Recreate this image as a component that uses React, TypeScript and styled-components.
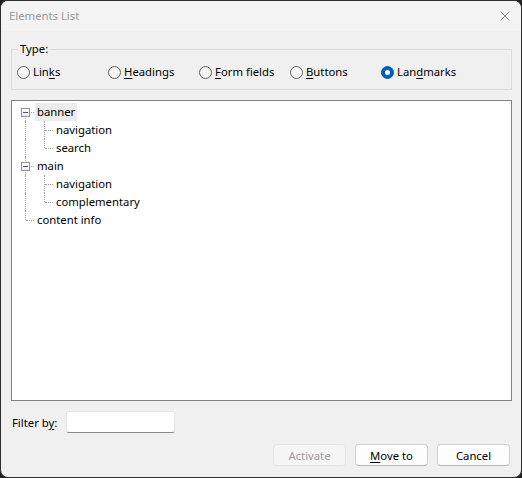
import React from "react";
import styled, { createGlobalStyle, css } from "styled-components";

const Global = createGlobalStyle`
  html, body { margin: 0; padding: 0; background: #202020; }
  body { width: 522px; height: 478px; overflow: hidden; }
  * { box-sizing: border-box; }
`;

const FONT = `"Noto Sans", "Open Sans", sans-serif`;
const SIZE = "11.3px";

const Window = styled.div`
  width: 522px;
  height: 478px;
  border: 1px solid #2e2e2e;
  border-radius: 8px;
  overflow: hidden;
  background: #f0f0f0;
  display: flex;
  flex-direction: column;
  font-family: ${FONT};
  font-size: ${SIZE};
  color: #000;
`;

const TitleBar = styled.div`
  height: 30px;
  flex: none;
  background: #f3f3f3;
  display: flex;
  align-items: center;
  justify-content: space-between;
  padding: 0 10px 0 8px;
`;

const Title = styled.span`
  color: #9a9a9a;
  line-height: 16px;
`;

const Close = styled.svg`
  width: 10px;
  height: 10px;
  margin-right: 1px;
`;

const Body = styled.div`
  flex: 1;
  display: flex;
  flex-direction: column;
  padding: 10px 9px 10px 10px;
`;

const Group = styled.fieldset`
  margin: 0;
  padding: 7px 5px 9px 5px;
  border: 1px solid #dcdcdc;
  min-width: 0;
`;

const Legend = styled.legend`
  padding: 0 2px;
  margin-left: 1px;
  line-height: 16px;
`;

const RadioRow = styled.div`
  display: grid;
  grid-template-columns: repeat(5, 91px);
  height: 16px;
  align-items: center;
`;

const RadioItem = styled.label`
  display: flex;
  align-items: center;
  gap: 3px;
  line-height: 16px;
  white-space: nowrap;
`;

const RadioCircle = styled.span<{ $checked?: boolean }>`
  width: 13px;
  height: 13px;
  border-radius: 50%;
  flex: none;
  display: flex;
  align-items: center;
  justify-content: center;
  ${(p) =>
    p.$checked
      ? css`
          background: #005fb8;
          border: 1px solid #005fb8;
          &::after {
            content: "";
            width: 5px;
            height: 5px;
            border-radius: 50%;
            background: #fff;
          }
        `
      : css`
          background: #f5f5f5;
          border: 1px solid #606060;
        `}
`;

const U = styled.span`
  text-decoration: underline;
  text-underline-offset: 2px;
`;

const TreeBox = styled.div`
  margin-top: 10px;
  height: 301px;
  flex: none;
  background: #fff;
  border: 1px solid #838383;
  padding: 2px 0 0 3px;
`;

const Row = styled.div`
  display: flex;
  height: 18px;
  align-items: stretch;
`;

type Kind = "first" | "tee" | "elbow" | "pipe";

const Cell = styled.div<{ $kind: Kind }>`
  width: 19px;
  flex: none;
  position: relative;
  &::before {
    content: "";
    position: absolute;
    left: 10px;
    border-left: 1px dotted #a0a0a0;
    top: ${(p) => (p.$kind === "first" ? "9px" : "0")};
    bottom: ${(p) => (p.$kind === "elbow" ? "9px" : "0")};
  }
  ${(p) =>
    p.$kind !== "pipe" &&
    css`
      &::after {
        content: "";
        position: absolute;
        left: 11px;
        right: 0;
        top: 9px;
        border-top: 1px dotted #a0a0a0;
      }
    `}
`;

const ExpandBox = styled.span`
  position: absolute;
  left: 6px;
  top: 5px;
  width: 9px;
  height: 9px;
  border: 1px solid #919191;
  background: linear-gradient(#ffffff, #ececec);
  z-index: 1;
  &::after {
    content: "";
    position: absolute;
    left: 1px;
    top: 3px;
    width: 5px;
    height: 1px;
    background: #2c5aa8;
  }
`;

const Label = styled.span<{ $selected?: boolean }>`
  margin-left: 1px;
  padding: 0 2px;
  display: flex;
  align-items: center;
  line-height: 16px;
  background: ${(p) => (p.$selected ? "#ececec" : "transparent")};
`;

const FilterRow = styled.div`
  display: flex;
  align-items: center;
  margin-top: 10px;
`;

const FilterLabel = styled.span`
  width: 55px;
  padding-left: 1px;
`;

const Input = styled.div`
  width: 109px;
  height: 22px;
  background: #fff;
  border: 1px solid #e6e6e6;
  border-bottom-color: #8a8a8a;
  border-radius: 3px;
`;

const ButtonRow = styled.div`
  display: flex;
  justify-content: flex-end;
  gap: 9px;
  margin-top: 11px;
  padding-right: 2px;
`;

const Button = styled.button<{ $disabled?: boolean }>`
  width: 73px;
  height: 22px;
  font-family: ${FONT};
  font-size: ${SIZE};
  border-radius: 4px;
  padding: 0;
  ${(p) =>
    p.$disabled
      ? css`
          background: #f5f5f5;
          border: 1px solid #e5e5e5;
          color: #9d9d9d;
        `
      : css`
          background: #fdfdfd;
          border: 1px solid #d0d0d0;
          border-bottom-color: #b5b5b5;
          color: #000;
        `}
`;

const rows: { label: string; cells: Kind[]; box?: boolean; selected?: boolean }[] = [
  { label: "banner", cells: ["first"], box: true, selected: true },
  { label: "navigation", cells: ["pipe", "tee"] },
  { label: "search", cells: ["pipe", "elbow"] },
  { label: "main", cells: ["tee"], box: true },
  { label: "navigation", cells: ["pipe", "tee"] },
  { label: "complementary", cells: ["pipe", "elbow"] },
  { label: "content info", cells: ["elbow"] },
];

const radios: React.ReactNode[] = [
  <>Lin<U>k</U>s</>,
  <><U>H</U>eadings</>,
  <><U>F</U>orm fields</>,
  <><U>B</U>uttons</>,
  <>Lan<U>d</U>marks</>,
];

export default function App() {
  return (
    <>
      <Global />
      <Window>
        <TitleBar>
          <Title>Elements List</Title>
          <Close viewBox="0 0 10 10">
            <path d="M0.5 0.5 L9.5 9.5 M9.5 0.5 L0.5 9.5" stroke="#8a8a8a" strokeWidth="1" fill="none" />
          </Close>
        </TitleBar>
        <Body>
          <Group>
            <Legend>Type:</Legend>
            <RadioRow>
              {radios.map((r, i) => (
                <RadioItem key={i}>
                  <RadioCircle $checked={i === 4} />
                  <span>{r}</span>
                </RadioItem>
              ))}
            </RadioRow>
          </Group>
          <TreeBox>
            {rows.map((r, i) => (
              <Row key={i}>
                {r.cells.map((k, j) => (
                  <Cell key={j} $kind={k}>
                    {r.box && j === r.cells.length - 1 && <ExpandBox />}
                  </Cell>
                ))}
                <Label $selected={r.selected}>{r.label}</Label>
              </Row>
            ))}
          </TreeBox>
          <FilterRow>
            <FilterLabel>
              Filter b<U>y</U>:
            </FilterLabel>
            <Input />
          </FilterRow>
          <ButtonRow>
            <Button $disabled>Activate</Button>
            <Button>
              <U>M</U>ove to
            </Button>
            <Button>Cancel</Button>
          </ButtonRow>
        </Body>
      </Window>
    </>
  );
}
